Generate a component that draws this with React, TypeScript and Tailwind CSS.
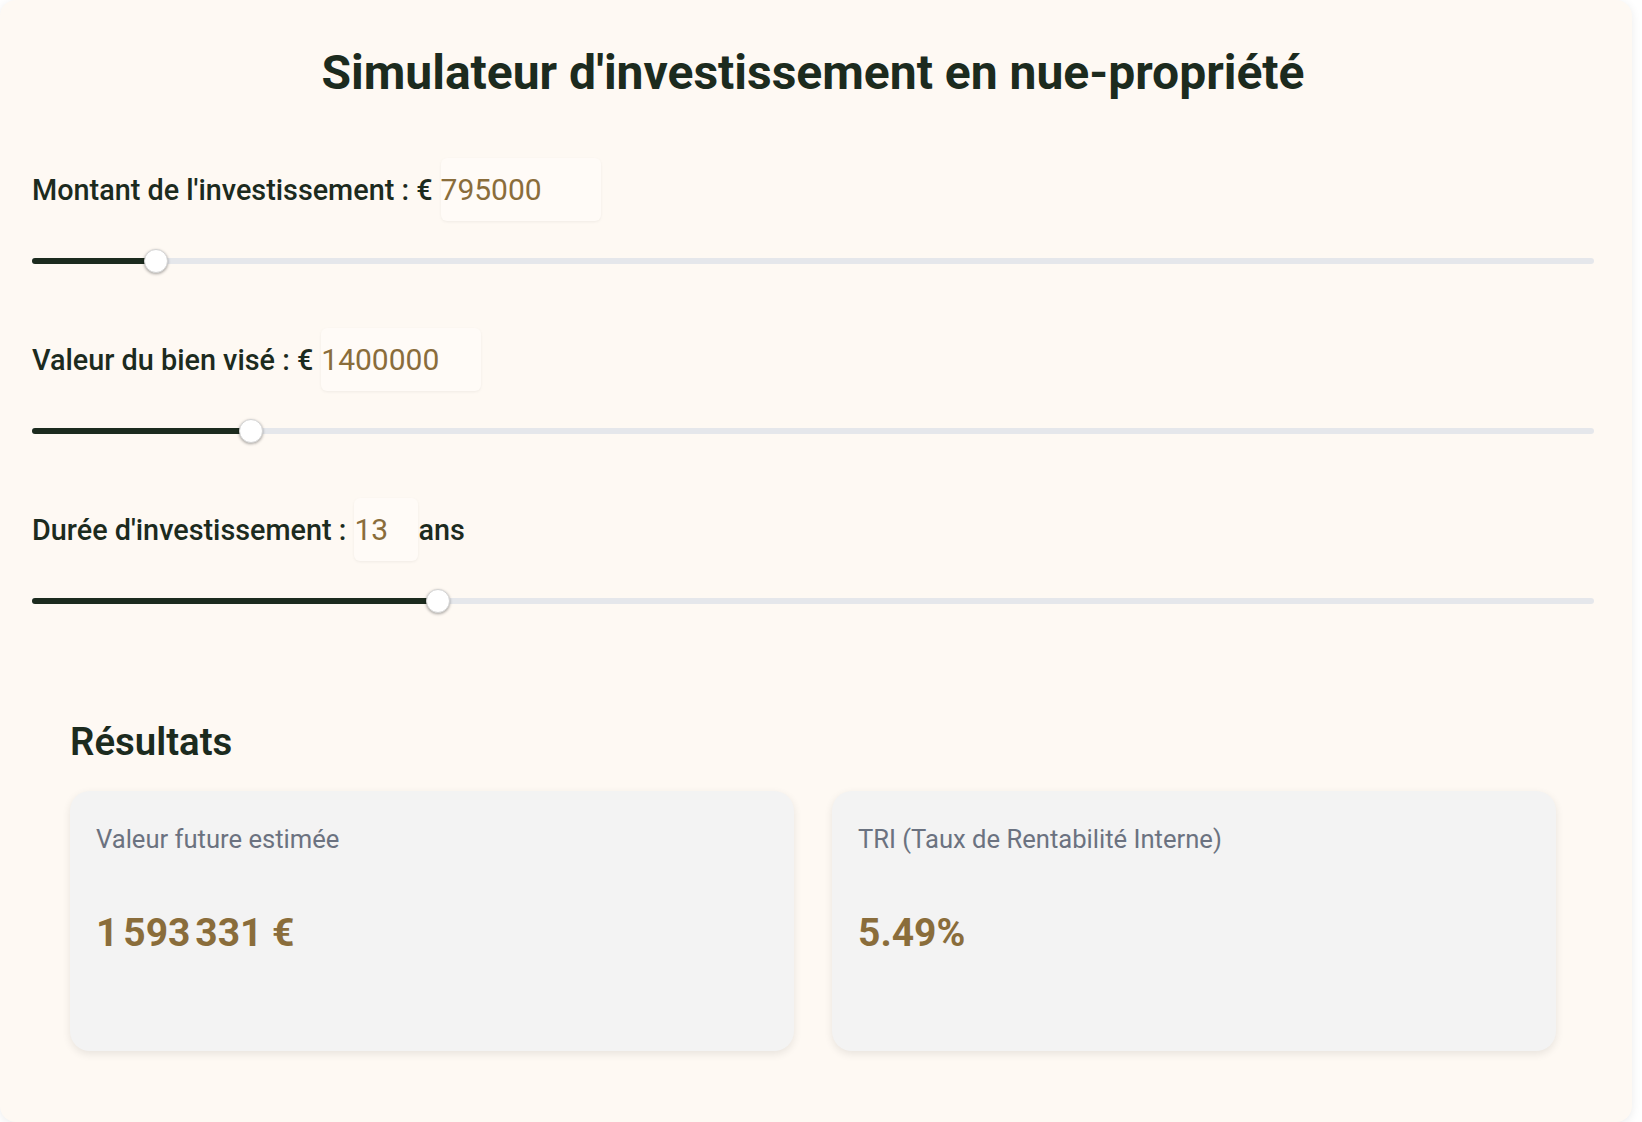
import { useState } from 'react';

type Field = {
  label: string;
  value: number;
  max: number;
  inputWidth: string;
  suffix?: string;
};

const fields: Field[] = [
  { label: "Montant de l'investissement : €", value: 795000, max: 10000000, inputWidth: 'w-[160px]' },
  { label: 'Valeur du bien visé : €', value: 1400000, max: 10000000, inputWidth: 'w-[160px]' },
  { label: "Durée d'investissement :", value: 13, max: 50, inputWidth: 'w-[64px]', suffix: 'ans' },
];

function Slider({ value, max }: { value: number; max: number }) {
  const pct = (value / max) * 100;
  return (
    <div className="relative h-6 flex items-center">
      <div className="w-full h-[6px] rounded-full bg-[#e5e7eb]" />
      <div className="absolute left-0 h-[6px] rounded-full bg-[#1c2b1e]" style={{ width: `${pct}%` }} />
      <div
        className="absolute w-6 h-6 -ml-3 rounded-full bg-white border border-[#d4d4d4] shadow-[0_1px_3px_rgba(0,0,0,0.35)]"
        style={{ left: `${pct}%` }}
      />
    </div>
  );
}

export default function App() {
  const [values] = useState(fields.map((f) => f.value));

  return (
    <div className="min-h-screen bg-white font-['Roboto',sans-serif]">
      <div className="w-[1632px] h-[1122px] bg-[#fef9f3] rounded-2xl shadow-[0_2px_10px_rgba(0,0,0,0.08)] pl-8 pr-[38px] pt-[44px] pb-8">
        <h1 className="text-center text-[48px] leading-[58px] font-bold text-[#1c2b1e]">
          Simulateur d'investissement en nue-propriété
        </h1>

        <div className="mt-[56px]">
          {fields.map((f, i) => (
            <div key={f.label} className="mb-[55px]">
              <div className="flex items-center h-[63px] text-[28.8px] text-[#1c2b1e]">
                <span className="font-medium pt-[2px]">{f.label}</span>
                <input
                  readOnly
                  value={values[i]}
                  className={`${f.inputWidth} h-[63px] ml-[8px] px-0 bg-[#fffbf7] rounded-md shadow-[0_1px_3px_rgba(0,0,0,0.06)] text-[30px] text-[#8a6d3b] outline-none`}
                />
                {f.suffix && <span className="font-medium pt-[2px]">{f.suffix}</span>}
              </div>
              <div className="mt-[28px]">
                <Slider value={values[i]} max={f.max} />
              </div>
            </div>
          ))}
        </div>

        <div className="px-[38px] pt-[53px]">
          <h2 className="text-[38.4px] leading-[42px] font-semibold text-[#1c2b1e]">Résultats</h2>
          <div className="mt-[28px] grid grid-cols-2 gap-[38px]">
            <div className="h-[260px] rounded-[20px] bg-[#f3f3f3] shadow-[0_3px_8px_rgba(0,0,0,0.09)] pl-[26px] pt-[30px]">
              <p className="text-[25.6px] leading-[36px] text-[#6b7280]">Valeur future estimée</p>
              <p className="mt-[52px] text-[39px] leading-[48px] font-bold text-[#8a6d3b]">1{'\u202F'}593{'\u202F'}331 €</p>
            </div>
            <div className="h-[260px] rounded-[20px] bg-[#f3f3f3] shadow-[0_3px_8px_rgba(0,0,0,0.09)] pl-[26px] pt-[30px]">
              <p className="text-[25.6px] leading-[36px] text-[#6b7280]">TRI (Taux de Rentabilité Interne)</p>
              <p className="mt-[52px] text-[39px] leading-[48px] font-bold text-[#8a6d3b]">5.49%</p>
            </div>
          </div>
        </div>
      </div>
    </div>
  );
}
